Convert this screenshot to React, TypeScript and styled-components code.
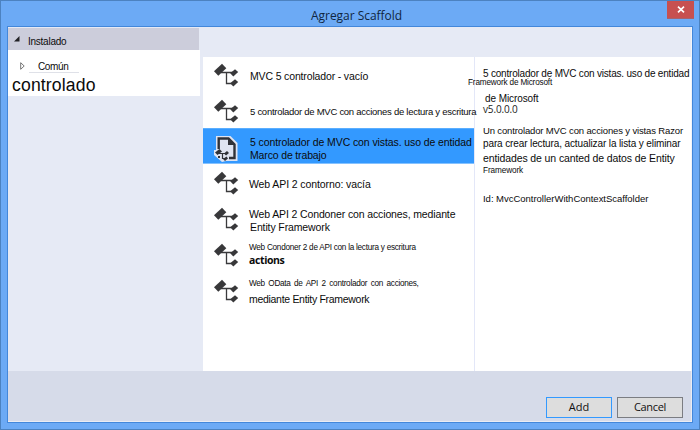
import React from "react";
import styled, { createGlobalStyle, css } from "styled-components";

const GlobalStyle = createGlobalStyle`
  * { box-sizing: border-box; }
  body { margin: 0; overflow: hidden; }
`;

const Window = styled.div`
  width: 700px;
  height: 430px;
  display: flex;
  flex-direction: column;
  background: #6caaf5;
  border: 1px solid #4c82c0;
  padding: 0 6px 6px;
  font-family: "Liberation Sans", Arial, sans-serif;
  color: #0b0b0b;
`;

const TitleBar = styled.header`
  height: 25px;
  flex: none;
  display: grid;
  grid-template-columns: 39px 1fr 27px;
  margin-right: -1px;
  align-items: start;
`;

const Title = styled.h1`
  grid-column: 2;
  margin: 0;
  padding-top: 7px;
  text-align: center;
  font: 400 12px/16px "Open Sans", sans-serif;
  letter-spacing: -0.04px;
  color: #10263f;
`;

const CloseButton = styled.button`
  width: 27px;
  height: 18px;
  padding: 0;
  border: 0;
  border-bottom: 1px solid #a4636f;
  background: #c75050;
  display: flex;
  align-items: center;
  justify-content: center;
`;

const Client = styled.div`
  flex: 1;
  display: flex;
  flex-direction: column;
  border: 1px solid #4387da;
  background: #d6dbe9;
`;

const Body = styled.div`
  height: 344px;
  flex: none;
  display: flex;
  background: #e6eaf5;
  border-right: 1px solid #f2f4f9;
`;

const Sidebar = styled.aside`
  width: 195px;
  padding-top: 1px;
`;

const SidebarHeader = styled.div`
  height: 22px;
  margin-right: 4px;
  padding: 7px 0 0 6px;
  display: flex;
  align-items: flex-start;
  gap: 8px;
  background: #cccddb;
`;

const TreeBox = styled.div`
  height: 46px;
  margin-right: 3px;
  padding-left: 4px;
  background: #fff;
`;

const TreeNode = styled.div`
  width: 67px;
  height: 23px;
  display: flex;
  padding-left: 8px;
`;

const TreeLabel = styled.div`
  width: 50px;
  margin-left: 4px;
  padding: 10px 0 0 9px;
  border-bottom: 1px solid #dfe1e8;
`;

const ExpandIcon = styled.svg`
  margin-top: 12px;
`;

const Main = styled.main`
  flex: 1;
  display: flex;
  flex-direction: column;
`;

const TopStrip = styled.div`
  height: 30px;
  flex: none;
`;

const Panels = styled.div`
  flex: 1;
  display: flex;
  background: #fff;
`;

const List = styled.ul`
  width: 272px;
  margin: 0;
  padding: 0;
  list-style: none;
  border-right: 1px solid #e3e7f8;
`;

const Item = styled.li<{ $selected?: boolean }>`
  height: 36px;
  display: flex;
  padding-left: 11px;
  white-space: nowrap;
  &:first-child { height: 35px; }
  &:first-child > svg { margin-top: 6px; }
  ${(p) =>
    p.$selected &&
    css`
      background: #3399ff;
      border-top: 1px solid #5aaeff;
      border-bottom: 1px solid #85c2ff;
    `}
`;

const ItemIcon = styled.svg`
  flex: none;
  margin-top: 7px;
`;

const ItemText = styled.div<{ $top: number }>`
  margin-left: 11px;
  padding-top: ${(p) => p.$top}px;
`;

const Line = styled.div<{
  $size?: number;
  $spacing?: number;
  $gap?: number;
  $indent?: number;
}>`
  font-size: ${(p) => p.$size ?? 10.5}px;
  letter-spacing: ${(p) => p.$spacing ?? -0.12}px;
  line-height: 13px;
  margin-top: ${(p) => p.$gap ?? 0}px;
  margin-left: ${(p) => p.$indent ?? 0}px;
  white-space: nowrap;
`;

const SpacedLine = styled(Line)`
  word-spacing: 1.5px;
`;

const BoldLine = styled(Line)`
  font-family: "Open Sans", sans-serif;
  font-weight: 700;
`;

const VersionLine = styled(Line)`
  font-family: "Open Sans", sans-serif;
  color: #222;
`;

const Details = styled.section`
  flex: 1;
  padding: 10px 0 0 8px;
`;

const Footer = styled.footer`
  flex: 1;
  display: flex;
  justify-content: flex-end;
  gap: 5px;
  padding: 26px 8px 0 0;
  border: 1px solid #e9ecf3;
  border-width: 0 1px 1px 0;
`;

const Button = styled.button<{ $primary?: boolean; $spacing?: number }>`
  width: 66px;
  height: 21px;
  padding: 0 0 1px;
  border: 1px solid ${(p) => (p.$primary ? "#3399ff" : "#7b7d82")};
  background: #dddddd;
  font: 400 11px/16px "Open Sans", sans-serif;
  letter-spacing: ${(p) => p.$spacing ?? 0}px;
  color: #111;
`;

function NodesIcon() {
  return (
    <ItemIcon width="25" height="25" viewBox="0 0 25 25">
      <path d="M7 9.5H19M12.5 10V20.5H19" fill="none" stroke="#3a3a3c" strokeWidth="1.3" />
      <g fill="#38383a">
        <path d="M0 8.2 8 .7 12.3 5.2 4.3 12.7Z" />
        <path d="M16.2 10.3 21 6.2 24.2 9 19.3 13.5Z" />
        <path d="M16.2 20.3 21 16.2 24.2 19 19.3 23.5Z" />
      </g>
    </ItemIcon>
  );
}

function DocumentIcon() {
  return (
    <ItemIcon width="25" height="26" viewBox="0 0 25 26">
      <path d="M2 0H16.5L23.5 7V25H12L8 26 0 19V14H2Z" fill="#dfe4f1" />
      <path d="M4.7 13V2.5H14.5L20.5 8.5V22H15" fill="none" stroke="#303238" strokeWidth="2.4" />
      <path d="M14 2V9H21Z" fill="#303238" />
      <path d="M5 17.5H12M8.5 17V22.5H12" fill="none" stroke="#303238" strokeWidth="1.2" />
      <g fill="#303238">
        <path d="M1 16.5 5.5 13 8 15.5 3.5 19Z" />
        <path d="M10 17.5 13 15 15 17 12 19.5Z" />
        <path d="M9 23 12.5 20.5 14 22.5 11 25Z" />
        <path d="M4 20h2v2H4z" />
      </g>
    </ItemIcon>
  );
}

export default function App() {
  return (
    <>
      <GlobalStyle />
      <Window>
        <TitleBar>
          <Title>Agregar Scaffold</Title>
          <CloseButton aria-label="Close">
            <svg width="8" height="7" viewBox="0 0 8 7">
              <path d="M1 .7 7 6.3M7 .7 1 6.3" stroke="#fff" strokeWidth="1.7" />
            </svg>
          </CloseButton>
        </TitleBar>
        <Client>
          <Body>
            <Sidebar>
              <SidebarHeader>
                <svg width="6" height="7" viewBox="0 0 6 7">
                  <path d="M5.5 1V6.5H0Z" fill="#222226" />
                </svg>
                <Line $size={10} $spacing={-0.25}>Instalado</Line>
              </SidebarHeader>
              <TreeBox>
                <TreeNode>
                  <ExpandIcon width="5" height="8" viewBox="0 0 5 8">
                    <path d="M.7 .7V7.3L4.2 4Z" fill="#fff" stroke="#666" strokeWidth=".9" />
                  </ExpandIcon>
                  <TreeLabel>
                    <Line $size={10} $spacing={-0.35}>Común</Line>
                  </TreeLabel>
                </TreeNode>
                <Line $size={17.6} $spacing={0.15} $gap={6}>controlado</Line>
              </TreeBox>
            </Sidebar>
            <Main>
              <TopStrip />
              <Panels>
                <List>
                  <Item>
                    <NodesIcon />
                    <ItemText $top={13}>
                      <Line $spacing={-0.15}>MVC 5 controlador - vacío</Line>
                    </ItemText>
                  </Item>
                  <Item>
                    <NodesIcon />
                    <ItemText $top={13}>
                      <Line $size={9.5} $spacing={-0.27}>
                        5 controlador de MVC con acciones de lectura y escritura
                      </Line>
                    </ItemText>
                  </Item>
                  <Item $selected>
                    <DocumentIcon />
                    <ItemText $top={7}>
                      <Line $spacing={-0.1}>5 controlador de MVC con vistas. uso de entidad</Line>
                      <Line $spacing={-0.15}>Marco de trabajo</Line>
                    </ItemText>
                  </Item>
                  <Item>
                    <NodesIcon />
                    <ItemText $top={14}>
                      <Line $spacing={-0.1} $indent={-1}>Web API 2 contorno: vacía</Line>
                    </ItemText>
                  </Item>
                  <Item>
                    <NodesIcon />
                    <ItemText $top={8}>
                      <Line $spacing={-0.13} $indent={-1}>Web API 2 Condoner con acciones, mediante</Line>
                      <Line>Entity Framework</Line>
                    </ItemText>
                  </Item>
                  <Item>
                    <NodesIcon />
                    <ItemText $top={5}>
                      <Line $size={8.2} $spacing={-0.26} $indent={-1}>
                        Web Condoner 2 de API con la lectura y escritura
                      </Line>
                      <BoldLine $size={10.5} $spacing={-0.38} $indent={-1}>actions</BoldLine>
                    </ItemText>
                  </Item>
                  <Item>
                    <NodesIcon />
                    <ItemText $top={5}>
                      <SpacedLine $size={8.2} $spacing={-0.28} $indent={-1}>
                        Web OData de API 2 controlador con acciones,
                      </SpacedLine>
                      <Line $spacing={-0.3} $gap={3} $indent={-1}>mediante Entity Framework</Line>
                    </ItemText>
                  </Item>
                </List>
                <Details>
                  <Line $size={10} $spacing={-0.2}>5 controlador de MVC con vistas. uso de entidad</Line>
                  <Line $size={8.2} $spacing={-0.17} $gap={-4} $indent={-15}>Framework de Microsoft</Line>
                  <Line $size={10} $spacing={-0.08} $gap={3} $indent={2}>de Microsoft</Line>
                  <VersionLine $size={10} $spacing={-0.15} $gap={-2}>v5.0.0.0</VersionLine>
                  <Line $size={9.5} $spacing={-0.14} $gap={8}>Un controlador MVC con acciones y vistas Razor</Line>
                  <Line $size={10} $spacing={-0.12}>para crear lectura, actualizar la lista y eliminar</Line>
                  <Line $spacing={-0.11} $gap={2}>entidades de un canted de datos de Entity</Line>
                  <Line $size={8.2} $spacing={-0.1} $gap={-1}>Framework</Line>
                  <Line $size={9.5} $spacing={-0.02} $gap={15}>Id: MvcControllerWithContextScaffolder</Line>
                </Details>
              </Panels>
            </Main>
          </Body>
          <Footer>
            <Button $primary>Add</Button>
            <Button $spacing={-0.3}>Cancel</Button>
          </Footer>
        </Client>
      </Window>
    </>
  );
}
